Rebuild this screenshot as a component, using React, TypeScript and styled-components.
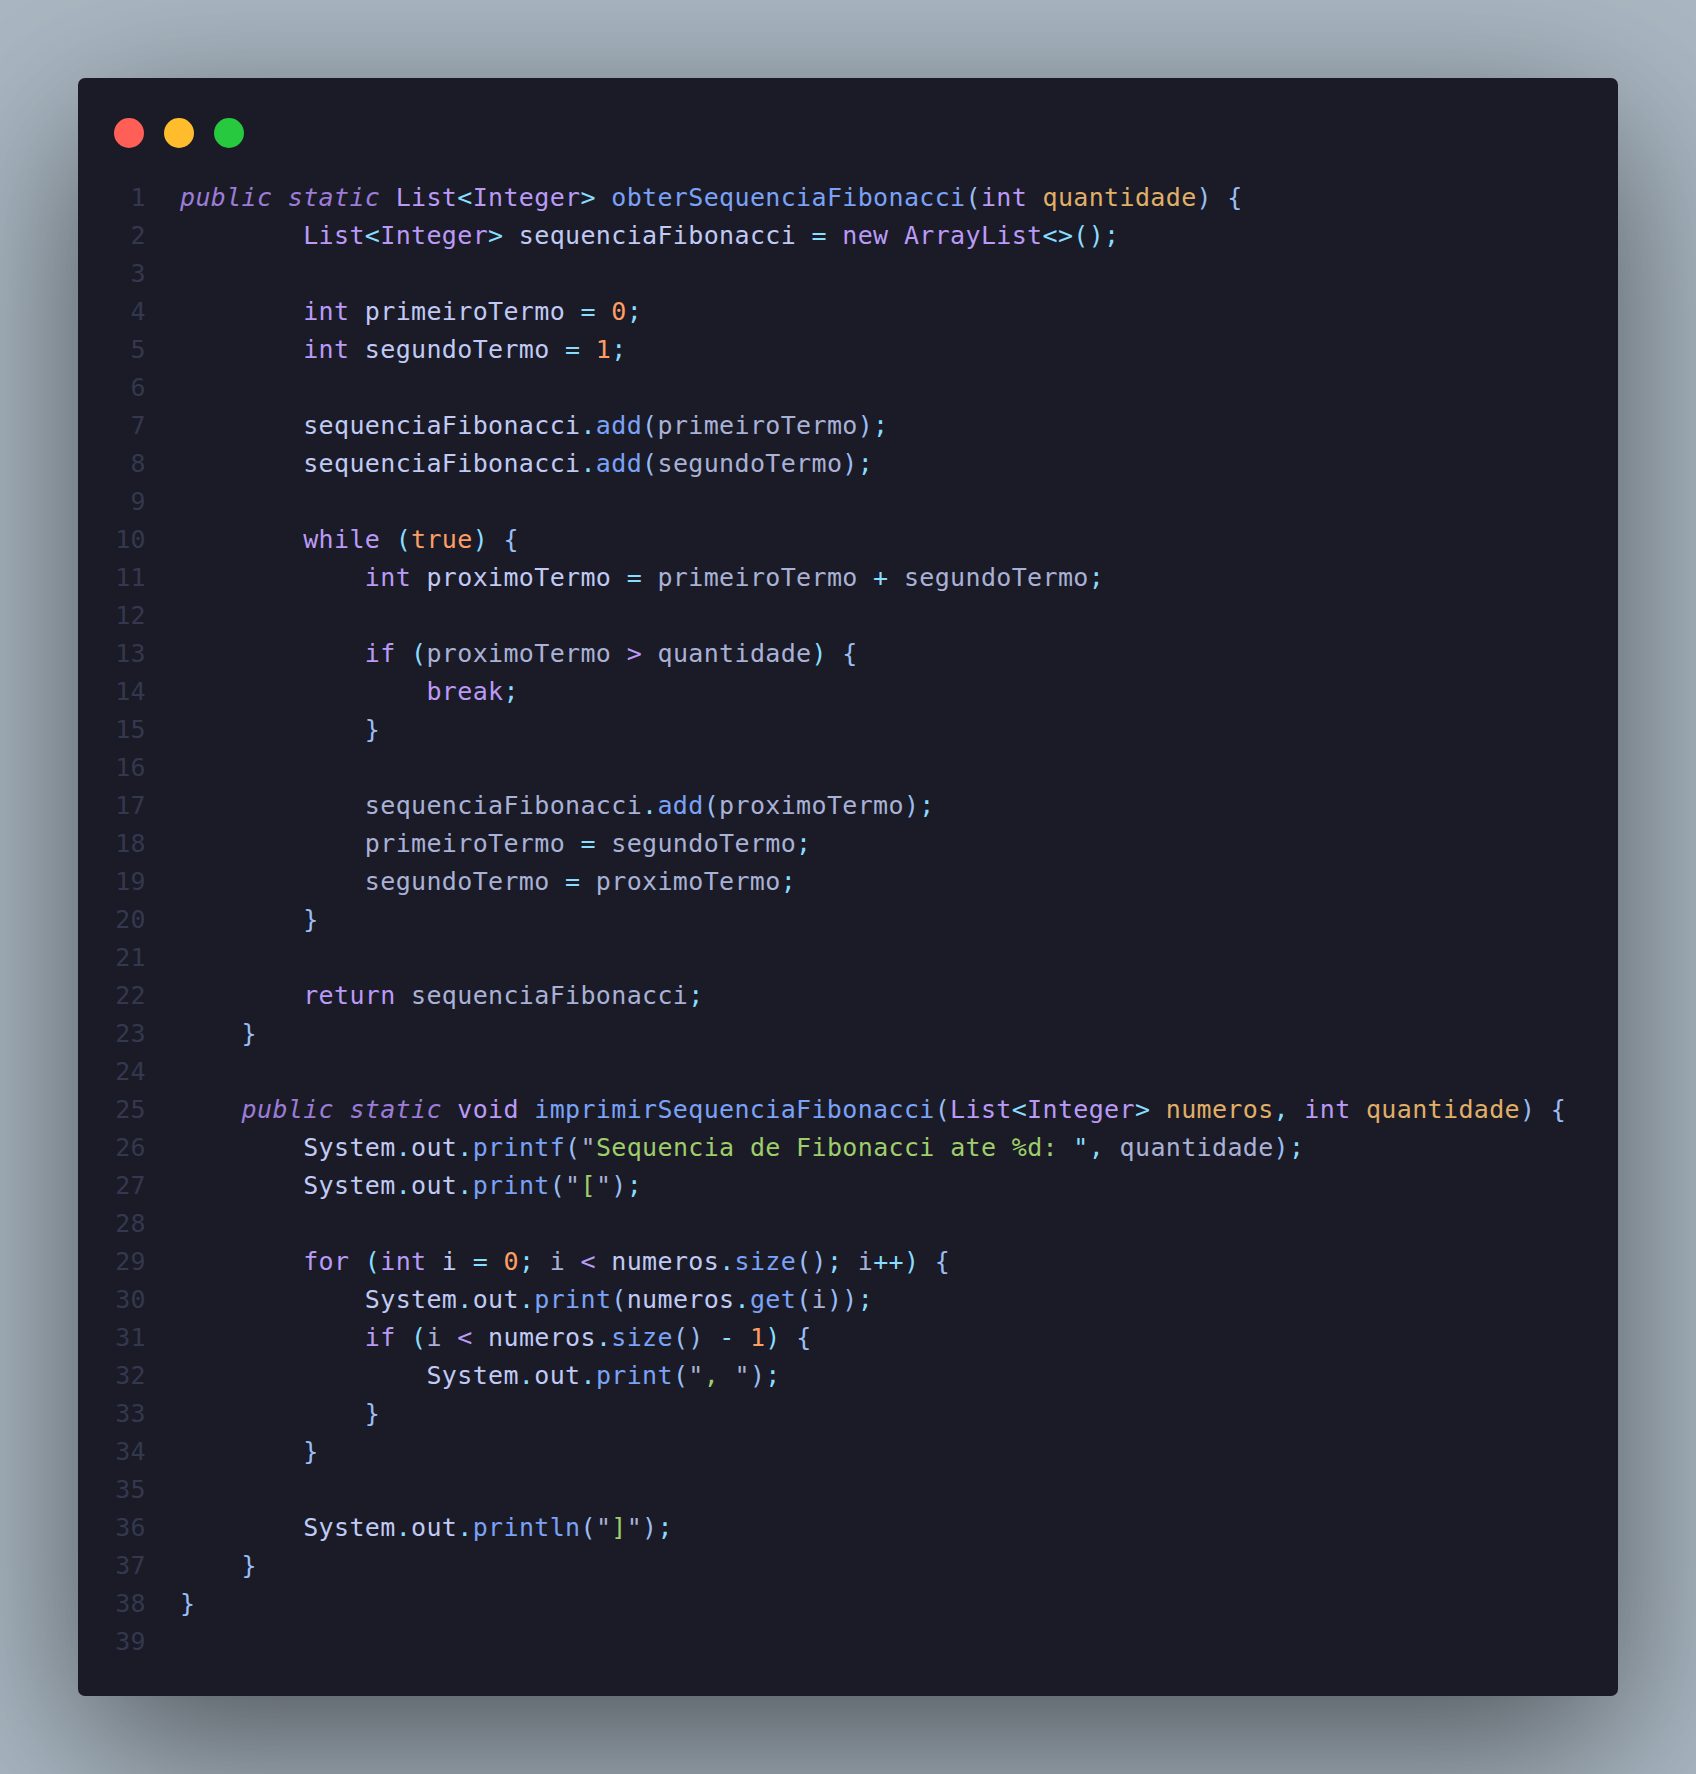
import React from "react";
import styled, { createGlobalStyle } from "styled-components";

const Global = createGlobalStyle`
  html, body { margin: 0; padding: 0; background: #abb8c3; }
`;

const Page = styled.div`
  box-sizing: border-box;
  width: 1696px;
  height: 1774px;
  padding: 78px;
  background: #abb8c3;
  overflow: hidden;
`;

const Window = styled.section`
  box-sizing: border-box;
  width: 1540px;
  height: 1618px;
  padding: 40px 36px 35px;
  border-radius: 7px;
  background: #1a1b26;
  box-shadow: 0 50px 170px rgba(0, 0, 0, 0.55);
`;

const Controls = styled.div`
  display: flex;
  gap: 20px;
  margin-bottom: 31px;
`;

const Dot = styled.span<{ $color: string }>`
  width: 30px;
  height: 30px;
  border-radius: 50%;
  background: ${(p) => p.$color};
`;

const Code = styled.div`
  display: flex;
  flex-direction: column;
  font-family: "DejaVu Sans Mono", monospace;
  font-size: 25px;
  letter-spacing: 0.35px;
  line-height: 38px;
`;

const Line = styled.div`
  display: flex;
  height: 38px;
  gap: 34px;
  white-space: pre;
`;

const Num = styled.span`
  width: 32px;
  text-align: right;
  color: #33384f;
  flex: none;
`;

const colors: Record<string, string> = {
  i: "#9d7cd8",
  k: "#bb9af7",
  f: "#7aa2f7",
  o: "#89ddff",
  b: "#9abdf5",
  n: "#ff9e64",
  s: "#9ece6a",
  p: "#e0af68",
  t: "#c0caf5",
  d: "#a9b1d6",
  _: "#a9b1d6",
};

const Token = styled.span<{ $kind: string }>`
  color: ${(p) => colors[p.$kind]};
  font-style: ${(p) => (p.$kind === "i" ? "italic" : "normal")};
`;

const sp8 = "~_:        ";
const sp4 = "~_:    ";
const sp12 = "~_:            ";
const sp16 = "~_:                ";

const source: string[] = [
  "~i:public static ~k:List~o:<~k:Integer~o:> ~f:obterSequenciaFibonacci~b:(~k:int ~p:quantidade~b:) {",
  sp8 + "~k:List~o:<~k:Integer~o:> ~t:sequenciaFibonacci ~o:= ~k:new ArrayList~o:<>();",
  "",
  sp8 + "~k:int ~t:primeiroTermo ~o:= ~n:0~o:;",
  sp8 + "~k:int ~t:segundoTermo ~o:= ~n:1~o:;",
  "",
  sp8 + "~t:sequenciaFibonacci~o:.~f:add~b:(~d:primeiroTermo~b:)~o:;",
  sp8 + "~t:sequenciaFibonacci~o:.~f:add~b:(~d:segundoTermo~b:)~o:;",
  "",
  sp8 + "~k:while ~o:(~n:true~o:) ~b:{",
  sp12 + "~k:int ~t:proximoTermo ~o:= ~d:primeiroTermo ~o:+ ~d:segundoTermo~o:;",
  "",
  sp12 + "~k:if ~o:(~d:proximoTermo ~k:> ~d:quantidade~o:) ~b:{",
  sp16 + "~k:break~o:;",
  sp12 + "~b:}",
  "",
  sp12 + "~d:sequenciaFibonacci~o:.~f:add~b:(~d:proximoTermo~b:)~o:;",
  sp12 + "~d:primeiroTermo ~o:= ~d:segundoTermo~o:;",
  sp12 + "~d:segundoTermo ~o:= ~d:proximoTermo~o:;",
  sp8 + "~b:}",
  "",
  sp8 + "~k:return ~d:sequenciaFibonacci~o:;",
  sp4 + "~b:}",
  "",
  sp4 + "~i:public static ~k:void ~f:imprimirSequenciaFibonacci~b:(~k:List~o:<~k:Integer~o:> ~p:numeros~o:, ~k:int ~p:quantidade~b:) {",
  sp8 + "~t:System~o:.~t:out~o:.~f:printf~b:(~d:\"~s:Sequencia de Fibonacci ate %d: ~o:\", ~d:quantidade~b:)~o:;",
  sp8 + "~t:System~o:.~t:out~o:.~f:print~b:(~d:\"~s:[~d:\"~b:)~o:;",
  "",
  sp8 + "~k:for ~o:(~k:int ~t:i ~o:= ~n:0~o:; ~d:i ~k:< ~t:numeros~o:.~f:size~b:()~o:; ~d:i~o:++) ~b:{",
  sp12 + "~t:System~o:.~t:out~o:.~f:print~b:(~t:numeros~o:.~f:get~b:(~d:i~b:))~o:;",
  sp12 + "~k:if ~o:(~d:i ~k:< ~t:numeros~o:.~f:size~b:() ~o:- ~n:1~o:) ~b:{",
  sp16 + "~t:System~o:.~t:out~o:.~f:print~b:(~d:\"~s:,~d: \"~b:)~o:;",
  sp12 + "~b:}",
  sp8 + "~b:}",
  "",
  sp8 + "~t:System~o:.~t:out~o:.~f:println~b:(~d:\"~s:]~d:\"~b:)~o:;",
  sp4 + "~b:}",
  "~b:}",
  "",
];

const parse = (line: string) =>
  line
    .split("~")
    .filter(Boolean)
    .map((part) => ({ kind: part[0], text: part.slice(2) }));

export default function App() {
  return (
    <Page>
      <Global />
      <Window>
        <Controls>
          <Dot $color="#ff5f56" />
          <Dot $color="#ffbd2e" />
          <Dot $color="#27c93f" />
        </Controls>
        <Code>
          {source.map((line, i) => (
            <Line key={i}>
              <Num>{i + 1}</Num>
              <span>
                {parse(line).map((t, j) => (
                  <Token key={j} $kind={t.kind}>
                    {t.text}
                  </Token>
                ))}
              </span>
            </Line>
          ))}
        </Code>
      </Window>
    </Page>
  );
}
